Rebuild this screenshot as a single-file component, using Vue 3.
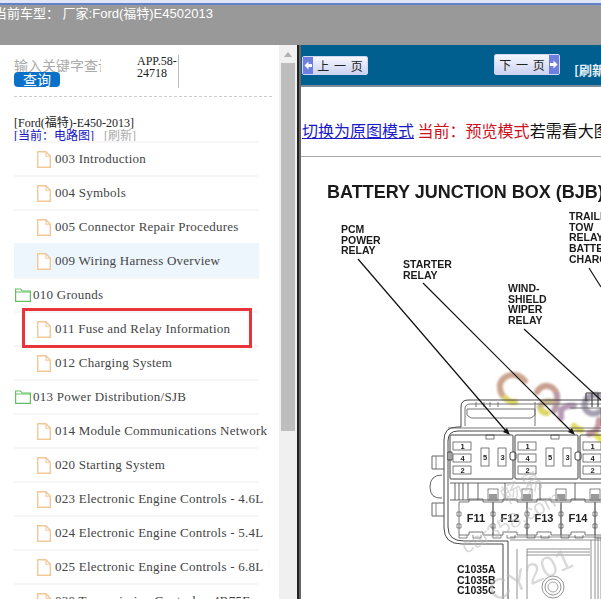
<script setup>
const rows = [
  { label: '003 Introduction' },
  { label: '004 Symbols' },
  { label: '005 Connector Repair Procedures' },
  { label: '009 Wiring Harness Overview', active: true },
  { label: '010 Grounds', folder: true },
  { label: '011 Fuse and Relay Information', boxed: true },
  { label: '012 Charging System' },
  { label: '013 Power Distribution/SJB', folder: true },
  { label: '014 Module Communications Network' },
  { label: '020 Starting System' },
  { label: '023 Electronic Engine Controls - 4.6L' },
  { label: '024 Electronic Engine Controls - 5.4L' },
  { label: '025 Electronic Engine Controls - 6.8L' },
  { label: '030 Transmission Controls - 4R75E' }
]

// relay blocks of the junction box, left edge of each
const relays = [450, 515, 580]
const fuses = [
  { name: 'F11', x: 459 },
  { name: 'F12', x: 493 },
  { name: 'F13', x: 527 },
  { name: 'F14', x: 561 },
  { name: '', x: 595 }
]
</script>

<template>
  <div class="page">
    <div class="title-strip"></div>
    <div class="top-bar">当前车型： 厂家:Ford(福特)E4502013</div>
    <div class="main">
      <aside class="side">
        <div class="side-inner">
          <div class="search">
            <div class="search-left">
              <div class="search-input">输入关键字查询</div>
              <button class="search-btn">查询</button>
            </div>
            <div class="app-code">APP.58-24718</div>
          </div>
          <div class="model">
            <div>[Ford(福特)-E450-2013]</div>
            <div class="model-sub"><span class="blue">[当前：电路图]</span><span class="gray">[刷新]</span></div>
          </div>
          <ul class="tree">
            <li v-for="row in rows" :key="row.label" :class="{ folder: row.folder, active: row.active, boxed: row.boxed }">
              <svg v-if="row.folder" class="ico-folder" width="16" height="14" viewBox="0 0 16 14">
                <path d="M.6 13.4V1h5l1.5 2h8.3v10.4z" fill="#fff" stroke="#62c062" stroke-width="1.2" />
                <path d="M.6 4h14.8" fill="none" stroke="#62c062" />
              </svg>
              <svg v-else class="ico-file" width="14" height="17" viewBox="0 0 14 17">
                <path d="M.7.7h8.2l4.4 4.6v11H.7z" fill="#fff" stroke="#f1c798" stroke-width="1.4" />
                <path d="M8.9.7v4.6h4.4" fill="none" stroke="#f1c798" stroke-width="1.1" />
              </svg>
              <span>{{ row.label }}</span>
            </li>
          </ul>
        </div>
        <div class="scrollbar">
          <div class="arrow"></div>
          <div class="thumb"></div>
        </div>
      </aside>
      <section class="content">
        <div class="pager">
          <button class="page-btn prev">
            <svg class="cap" width="10" height="17" viewBox="0 0 10 17"><path d="M1.5 8.5l4-4v2.5h3.5v3h-3.5v2.5z" fill="#fff" /></svg>
            <span class="cap-text">上 一 页</span>
          </button>
          <button class="page-btn next">
            <span class="cap-text">下 一 页</span>
            <svg class="cap" width="10" height="19" viewBox="0 0 10 19"><path d="M8.5 9.5l-4-4v2.5h-3.5v3h3.5v2.5z" fill="#fff" /></svg>
          </button>
          <span class="refresh">[刷新]</span>
        </div>
        <div class="mode-line">
          <a class="mode-link">切换为原图模式</a> <span class="red">当前：预览模式</span>若需看大图
        </div>
        <div class="drawing">
          <svg width="300" height="442" viewBox="301 157 300 442" font-family="'Liberation Sans', Arial, sans-serif" font-weight="700" fill="#1a1a1a">
            <text x="327" y="198" font-size="18">BATTERY JUNCTION BOX (BJB)</text>
            <g font-size="10.5">
              <text x="341" y="233">PCM</text><text x="341" y="244">POWER</text><text x="341" y="254">RELAY</text>
              <text x="403" y="268">STARTER</text><text x="403" y="279">RELAY</text>
              <text x="508" y="292">WIND-</text><text x="508" y="303">SHIELD</text><text x="508" y="313">WIPER</text><text x="508" y="324">RELAY</text>
              <text x="569" y="220">TRAILER</text><text x="569" y="231">TOW</text><text x="569" y="241">RELAY</text><text x="569" y="252">BATTERY</text><text x="569" y="263">CHARGE</text>
            </g>

            <!-- watermark, colour part sits under the linework -->
            <g class="soft" fill="none" stroke-width="6" stroke-linecap="round">
              <path d="M525 381q-6-7-14-6t-11 9q-1 9 5 14" stroke="#cba68f" />
              <path d="M505 398q4 4 10 4" stroke="#ddd566" />
              <path d="M537 392q4-7 11-6t9 9" stroke="#c8a090" />
              <path d="M557 395q1 9-3 16" stroke="#b99aa8" />
              <path d="M553 402q-10-2-13 5" stroke="#c3b48c" />
              <path d="M541 410q2 3 6 3" stroke="#ddd566" />
              <path d="M561 418v-8q5-5 13-4" stroke="#b59bb5" />
              <path d="M574 426q3 4 7 4" stroke="#e0d85e" />
              <path d="M600 396q-10-3-14 4t2 12q6 4 13-1" stroke="#a59fb0" />
              <path d="M599 420q0 12-10 14" stroke="#c59aa0" />
              <path d="M597 436l4 3" stroke="#e4e060" />
            </g>

            <g stroke="#333" stroke-width=".9" fill="none">
              <!-- housing outline -->
              <path d="M503 599V544H462q-18 0-18-16v-88q0-13 13-13h4v-20q0-7 7-7h133" />
              <path d="M508 599V541H464q-16 0-16-14v-86q0-10 10-10h143" />
              <path d="M465 426v-17q0-5 5-5h131" stroke="#666" />
              <path d="M448 428h153" stroke="#666" />
              <path d="M450 483H601M450 500H601" stroke="#555" />
              <path d="M455 483v17M459 483v17M463 483v17M468 483v17M478 483v17M505 483v17M540 483v17M575 483v17" stroke="#555" />
              <!-- upper connector -->
              <path d="M467 409h68v6l-4 3h-60l-4-3zM476 402v5M484 402v5M490 402v5M498 402v5M535 402v24M570 408h31v18" stroke="#666" />
              <path d="M586 393h15M586 393v8M592 393v14M598 393v14" stroke="#444" stroke-width="1.2" />
              <!-- side tabs -->
              <path d="M444 456h-12v13h12M444 503h-12v13h12M442 475q-12 0-12 12t12 11" stroke="#555" />
              <path d="M436 456v13M436 503v13" stroke="#777" />
              <path d="M448 452h4v8h-4z" fill="#fff" />
              <!-- lower body -->
              <path d="M510 537h91M510 540h91M527 549h63M527 552h63M527 555h63" stroke="#777" stroke-width=".8" />
              <path d="M517 549v50M527 549v50M591 540v59M595 537v62M598 537v62M601 537v62" stroke="#777" stroke-width=".8" />
              <circle cx="553" cy="587" r="11" stroke="#888" />
              <circle cx="553" cy="587" r="8" stroke="#888" />
              <circle cx="553" cy="587" r="5" stroke="#999" />
            </g>

            <g stroke="#111" stroke-width="1.2" fill="none">
              <path d="M358 259L506 431M423 283L571 431M524 329L601 400M589 268L601 287" />
            </g>
            <path d="M510 435l-7-3 4-4zM575 435l-7-3 4-4z" fill="#111" />

            <g v-for="x in relays" :key="x" stroke="#444" fill="none" font-size="7.5">
              <rect :x="x" y="435" width="63" height="44" rx="1" />
              <rect :x="x + 3" y="442" width="18" height="8" stroke-width=".7" />
              <rect :x="x + 3" y="454" width="18" height="8" stroke-width=".7" />
              <rect :x="x + 3" y="466" width="18" height="8" stroke-width=".7" />
              <rect :x="x + 31" y="448" width="8" height="18" stroke-width=".7" />
              <rect :x="x + 48" y="448" width="8" height="18" stroke-width=".7" />
              <rect :x="x + 36" y="435" width="8" height="4" stroke-width=".7" />
              <rect :x="x + 60" y="452" width="6" height="8" rx="2" fill="#fff" />
              <g fill="#222" stroke="none" text-anchor="middle">
                <text :x="x + 12.5" y="449">1</text>
                <text :x="x + 12.5" y="461">4</text>
                <text :x="x + 12.5" y="473">2</text>
                <text :x="x + 35" y="460">5</text>
                <text :x="x + 52.5" y="460">3</text>
              </g>
            </g>

            <g v-for="f in fuses" :key="f.x" stroke="#555" fill="none">
              <path :d="`M${f.x} 502h10v-3h14v3h10v33h-10v-3h-14v3h-10z`" stroke-width=".8" />
              <path :d="`M${f.x - 2} 512h4v4h-4zM${f.x - 2} 524h4v4h-4z`" stroke-width=".7" />
              <rect :x="f.x + 29" y="489" width="10" height="11" stroke-width=".7" />
              <rect :x="f.x + 30" y="494" width="8" height="5" fill="#999" stroke="none" />
              <path :d="`M${f.x} 535v3h8v-3M${f.x + 14} 535v3h8v-3`" stroke-width=".7" />
              <text :x="f.x + 17" y="522" font-size="11" fill="#222" stroke="none" text-anchor="middle">{{ f.name }}</text>
            </g>

            <g font-size="10.5">
              <text x="457" y="573">C1035A</text><text x="457" y="584">C1035B</text><text x="457" y="594">C1035C</text>
            </g>

            <!-- grey watermark on top -->
            <g font-family="'Liberation Sans', 'Noto Sans CJK SC', sans-serif" font-weight="400" fill="#bbb" opacity=".55">
              <text x="466" y="554" font-size="21" transform="rotate(-28 466 554)">car358.com</text>
              <text x="494" y="602" font-size="29" transform="rotate(-24 494 602)">CY201</text>
              <text x="506" y="505" font-size="22" transform="rotate(-28 506 505)">畅易</text>
            </g>
          </svg>
        </div>
      </section>
    </div>
  </div>
</template>

<style scoped>
.page {
  width: 601px;
  height: 599px;
  display: flex;
  flex-direction: column;
  overflow: hidden;
  background: #fff;
}
.title-strip {
  height: 5px;
  flex: none;
  background: linear-gradient(#dfe6f5 0 3px, #5f82c8 3px);
}
.top-bar {
  height: 40px;
  flex: none;
  background: #999;
  color: #fff;
  font: 13px/17px "Liberation Sans", "Noto Sans CJK SC", sans-serif;
  text-indent: -6px;
  white-space: nowrap;
  overflow: hidden;
}
.main {
  flex: 1;
  display: flex;
  min-height: 0;
}
.side {
  width: 297px;
  flex: none;
  display: flex;
  background: #fff;
}
.side-inner {
  width: 279px;
  flex: none;
  box-sizing: border-box;
  padding: 10px 0 0 14px;
  overflow: hidden;
}
.search {
  display: flex;
  width: 165px;
  height: 33px;
}
.search-left {
  width: 123px;
  flex: none;
}
.search-input {
  width: 87px;
  margin-top: 3px;
  height: 14px;
  overflow: hidden;
  color: #aaa;
  font: 14px/14px "Noto Sans CJK SC", sans-serif;
  white-space: nowrap;
}
.search-btn {
  display: block;
  width: 46px;
  height: 15px;
  padding: 0;
  border: none;
  border-radius: 4px;
  background: #0a70c8;
  color: #fff;
  font: 14px/15px "Noto Sans CJK SC", sans-serif;
}
.app-code {
  width: 42px;
  height: 33px;
  box-sizing: border-box;
  border-right: 1px solid #bbb;
  color: #222;
  font: 12px/12px "Liberation Serif", serif;
  word-break: break-all;
}
.model {
  margin: 8px 0 0 0;
  width: 258px;
  border-top: 1px dashed #ccc;
  padding-top: 20px;
  color: #222;
  font: 12px/12px "Liberation Serif", "Noto Sans CJK SC", serif;
}
.model-sub {
  line-height: 15px;
}
.blue {
  color: #1414c8;
}
.gray {
  margin-left: 10px;
  color: #aaa;
}
.tree {
  list-style: none;
  margin: -3px 0 0;
  padding: 0;
  width: 245px;
}
.tree li {
  position: relative;
  height: 34px;
  box-sizing: border-box;
  border-top: 2px solid #f6f6f6;
  display: flex;
  align-items: center;
  padding-left: 23px;
  gap: 4px;
  color: #444;
  font: 13px/16px "Liberation Serif", serif;
  letter-spacing: .25px;
  white-space: nowrap;
}
.tree li.folder {
  padding-left: 1px;
  gap: 2px;
}
.tree li.active {
  background: #edf6fd;
  border-top-color: #edf6fd;
}
.tree li.boxed {
  z-index: 1;
}
.tree li.boxed::after {
  content: "";
  position: absolute;
  left: 8px;
  top: -5px;
  width: 230px;
  height: 40px;
  box-sizing: border-box;
  border: 3px solid #e8353a;
}
.ico-file,
.ico-folder {
  flex: none;
}
.scrollbar {
  width: 18px;
  flex: none;
  background: #f0f0f0;
  display: flex;
  flex-direction: column;
  align-items: center;
}
.arrow {
  width: 0;
  height: 0;
  margin: 7px 0 6px;
  border-left: 4px solid transparent;
  border-right: 4px solid transparent;
  border-bottom: 5px solid #b0b0b0;
}
.thumb {
  width: 14px;
  height: 368px;
  background: #bdbdbd;
}
.content {
  flex: 1;
  min-width: 0;
  border-left: 2px solid #222;
  padding-left: 2px;
  background: linear-gradient(90deg, #666 0 2px, #fff 2px);
  overflow: hidden;
  white-space: nowrap;
}
.pager {
  height: 40px;
  background: #005f8f;
  border-bottom: 2px solid #7a8c98;
  display: flex;
  align-items: flex-start;
}
.page-btn {
  height: 19px;
  width: 66px;
  flex: none;
  margin: 11px 0 0 1px;
  padding: 0;
  border: 1px solid #cfd6f5;
  border-radius: 2px;
  background: linear-gradient(#f6f7fe, #ccd3f0);
  display: flex;
  align-items: center;
  color: #222;
  font: 12px/17px "Noto Sans CJK SC", sans-serif;
}
.cap {
  flex: none;
  background: #6f7fe0;
}
.cap-text {
  flex: 1;
  text-align: center;
  word-spacing: 2px;
}
.next {
  height: 21px;
  margin: 9px 0 0 126px;
}
.refresh {
  margin: 16px 0 0 14px;
  color: #e6eef4;
  font: 700 13px/18px "Noto Sans CJK SC", sans-serif;
}
.mode-line {
  height: 70px;
  box-sizing: border-box;
  padding: 32px 0 0 1px;
  border-bottom: 1px solid #aaa;
  background: #fff;
  color: #111;
  font: 16px/22px "Noto Sans CJK SC", sans-serif;
}
.mode-link {
  color: #1a1ac8;
  text-decoration: underline;
}
.red {
  color: #d0101c;
}
.drawing {
  background: #fff;
}
.drawing svg {
  display: block;
  filter: blur(.3px);
}
.soft {
  filter: blur(.8px);
}
</style>

<style>
html, body {
  margin: 0;
  background: #fff;
}
</style>
